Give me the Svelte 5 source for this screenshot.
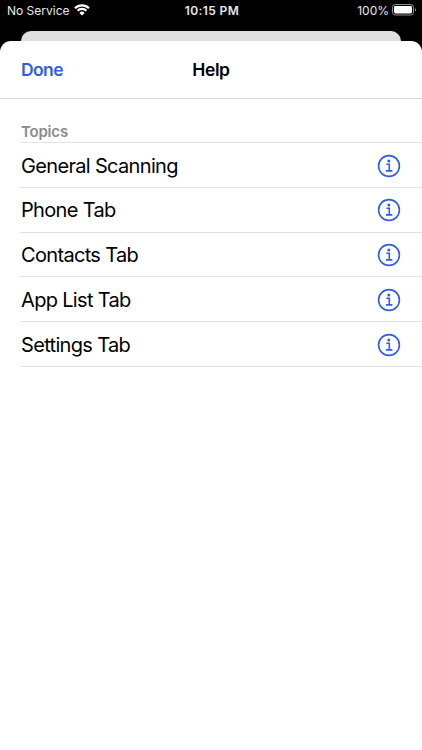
<script lang="ts">
	const topics = ['General Scanning', 'Phone Tab', 'Contacts Tab', 'App List Tab', 'Settings Tab'];
</script>

<div class="screen">
	<header class="status-bar">
		<div class="carrier">
			<span>No Service</span>
			<svg class="wifi" viewBox="0 0 16 12" aria-hidden="true">
				<path d="M1 4.3a10 10 0 0 1 14 0" />
				<path d="M3.5 6.8a6.4 6.4 0 0 1 9 0" />
				<path class="solid" d="M8 11.6 5.4 8.9a3.7 3.7 0 0 1 5.2 0z" />
			</svg>
		</div>
		<span class="time">10:15 PM</span>
		<div class="power">
			<span>100%</span>
			<svg class="battery" viewBox="0 0 25 12" aria-hidden="true">
				<rect class="shell" x="0.5" y="0.5" width="21" height="10.5" rx="2.8" />
				<rect class="charge" x="2" y="2" width="18" height="7.5" rx="1.4" />
				<path class="tip" d="M23 4v3.6c1.4-.5 1.4-3.1 0-3.6z" />
			</svg>
		</div>
	</header>

	<div class="sheet-behind"></div>

	<main class="sheet">
		<nav class="nav-bar">
			<button class="done">Done</button>
			<h1>Help</h1>
		</nav>

		<h2>Topics</h2>
		<ul>
			{#each topics as topic}
				<li>
					<span>{topic}</span>
					<svg class="info" viewBox="0 0 24 24" aria-hidden="true">
						<circle class="ring" cx="12" cy="12" r="10.4" />
						<circle class="dot" cx="11.8" cy="6.9" r="1.5" />
						<path d="M9.4 10.3h2.9v6.5M9 16.9h6.4" />
					</svg>
				</li>
			{/each}
		</ul>
	</main>
</div>

<style>
	:global(body) {
		margin: 0;
		background: #000;
	}

	.screen {
		display: flex;
		flex-direction: column;
		height: 750px;
		overflow: hidden;
		background: #000;
		font-family: Inter, 'Liberation Sans', sans-serif;
	}

	/* Status bar */
	.status-bar {
		display: grid;
		grid-template-columns: 1fr auto 1fr;
		align-items: center;
		box-sizing: border-box;
		height: 21px;
		margin-bottom: 10px;
		padding: 0 5px 0 7px;
		color: #e8e8e8;
		font-size: 12px;
	}

	.carrier,
	.power {
		display: flex;
		align-items: center;
		gap: 4px;
	}

	.power {
		justify-content: flex-end;
		gap: 3px;
	}

	.time {
		font-weight: 600;
		letter-spacing: 0.4px;
	}

	.wifi {
		width: 16px;
		height: 12px;
		margin-bottom: 1px;
		fill: none;
		stroke: #fff;
		stroke-width: 2.2;
	}

	.wifi .solid {
		fill: #fff;
		stroke: none;
	}

	.battery {
		width: 25px;
		height: 12px;
		margin-bottom: 1px;
	}

	.shell {
		fill: none;
		stroke: #8d8d8d;
	}

	.charge {
		fill: #fff;
	}

	.tip {
		fill: #8d8d8d;
	}

	/* Sheets */
	.sheet-behind {
		flex: none;
		height: 10px;
		margin: 0 21px;
		border-radius: 10px 10px 0 0;
		background: #e0e0e0;
	}

	.sheet {
		flex: 1;
		border-radius: 11px 11px 0 0;
		background: #fff;
	}

	.nav-bar {
		display: grid;
		grid-template-columns: 1fr auto 1fr;
		align-items: center;
		box-sizing: border-box;
		height: 58px;
		padding: 0 21px;
		border-bottom: 1px solid #d6d6d6;
	}

	.done {
		justify-self: start;
		padding: 0;
		border: 0;
		background: none;
		color: #2f5fe0;
		font: inherit;
		font-size: 17.5px;
		font-weight: 600;
		letter-spacing: -0.6px;
	}

	h1 {
		margin: 0;
		font-size: 17.5px;
		font-weight: 600;
		letter-spacing: -0.4px;
	}

	h2 {
		box-sizing: border-box;
		height: 43px;
		margin: 0;
		padding: 23px 0 0 21px;
		color: #8a8a8e;
		font-size: 15px;
		font-weight: 600;
		letter-spacing: -0.2px;
		line-height: 20px;
	}

	/* Topics */
	ul {
		margin: 0 0 0 20px;
		padding: 0;
		border-top: 1px solid #e2e2e2;
		list-style: none;
	}

	li {
		display: flex;
		align-items: center;
		justify-content: space-between;
		box-sizing: border-box;
		height: 44.8px;
		padding: 1.4px 21px 0 1px;
		border-bottom: 1px solid #e2e2e2;
		font-size: 20px;
		letter-spacing: -0.67px;
	}

	.info {
		width: 24px;
		height: 24px;
		fill: none;
		stroke: #2f5fe0;
		stroke-width: 1.6;
	}

	.info .dot {
		fill: #2f5fe0;
		stroke: none;
	}
</style>
